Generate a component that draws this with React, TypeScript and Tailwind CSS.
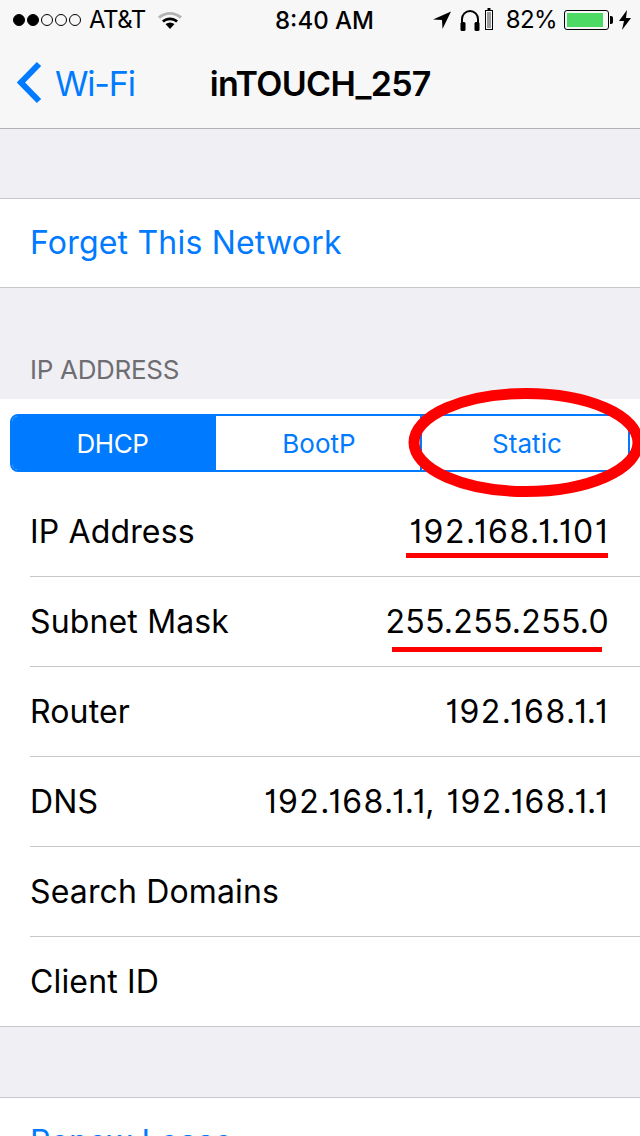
const BLUE = 'text-[#007aff]'

function StatusBar() {
  return (
    <div className="flex h-10 items-center justify-between pl-[13px] pr-[9px] text-[28px] tracking-[-0.5px] text-black">
      <div className="flex items-center">
        <div className="flex gap-[2px]">
          {[1, 2].map(i => (
            <span key={i} className="h-3 w-3 rounded-full border border-black bg-black" />
          ))}
          {[3, 4, 5].map(i => (
            <span key={i} className="h-3 w-3 rounded-full border border-black" />
          ))}
        </div>
        <span className="ml-[8px] text-[24px] leading-none">AT&amp;T</span>
        <svg width="26" height="20" viewBox="0 0 26 20" className="ml-[11px]">
          <path d="M1 6.5C8 .5 18 .5 25 6.5l-2 2.3C17 3.500 9 3.500 3 8.800z" fill="#b4b4b4" />
          <path d="M5 10.500C10 6.500 16 6.500 21 10.500l-1.800 2C15 9.500 11 9.500 6.800 12.500z" fill="#000" />
          <path d="M8.500 14C11.500 12 14.500 12 17.500 14L13 19z" fill="#000" />
        </svg>
      </div>
      <span className="absolute left-[275px] top-[6px] text-[24px] font-medium leading-[30px] tracking-[0px]">8:40 AM</span>
      <div className="flex items-center">
        <svg width="20" height="20" viewBox="0 0 20 20">
          <path d="M19 1.500 1 9.500l9 .5 .500 9z" fill="#000" />
        </svg>
        <svg width="22" height="24" viewBox="0 0 22 24" className="ml-[7px]">
          <path d="M3 18v-7a8 8 0 0 1 16 0v7" fill="none" stroke="#000" strokeWidth="2" />
          <rect x="1.500" y="14" width="5" height="9" rx="1.500" fill="#000" />
          <rect x="15.500" y="14" width="5" height="9" rx="1.500" fill="#000" />
        </svg>
        <svg width="8" height="24" viewBox="0 0 8 24" className="ml-[4px]">
          <rect x="2.500" y="0" width="3" height="2" fill="#000" />
          <rect x=".500" y="2.500" width="7" height="19" fill="none" stroke="#000" />
          <rect x="2" y="4" width="4" height="16" fill="#9a9a9a" />
        </svg>
        <span className="ml-[13px] text-[24px] leading-none tracking-[-0.6px]">82%</span>
        <div className="ml-[7px] flex h-[20px] w-[45px] items-center rounded-[3px] border border-black p-[2px]">
          <div className="h-full w-[36px] bg-[#4cd964]" />
        </div>
        <div className="ml-[1px] h-[8px] w-[3px] rounded-r-[2px] bg-black" />
        <svg width="12" height="20" viewBox="0 0 12 20" className="ml-[6px]">
          <path d="M8 0 0 11h5l-2 9 9-12H7z" fill="#000" />
        </svg>
      </div>
    </div>
  )
}

function NavBar() {
  return (
    <div className="relative flex h-[89px] items-center border-b border-[#b2b2b6]">
      <svg width="26" height="44" viewBox="0 0 26 44" className="ml-[17px] mt-[-2px]">
        <path d="M22 3 4 21.500 22 40" fill="none" stroke="#007aff" strokeWidth="6" />
      </svg>
      <span className={`ml-[12px] text-[34px] leading-none tracking-[-1.2px] ${BLUE}`}>Wi-Fi</span>
      <span className="ml-[75px] text-[34px] font-semibold leading-none tracking-[-0.7px] text-black">inTOUCH_257</span>
    </div>
  )
}

function Row({ label, value, spacing, last }: { label: string; value?: string; spacing?: string; last?: boolean }) {
  return (
    <div className={`flex flex-col pl-[30px] ${last ? 'h-[89px]' : 'h-[90px]'}`}>
      <div className={`flex flex-1 items-center justify-between pr-[31px] text-[32px] tracking-[0.15px] text-black ${last ? '' : 'border-b border-[#c8c7cc]'}`}>
        <span>{label}</span>
        {value && <span className={`[font-feature-settings:'cv01'] ${spacing}`}>{value}</span>}
      </div>
    </div>
  )
}

// the 1s sit wider in the reference, so rows with many of them get more spacing
const rows = [
  { label: 'IP Address', value: '192.168.1.101', spacing: 'tracking-[1.5px]' },
  { label: 'Subnet Mask', value: '255.255.255.0', spacing: 'tracking-[0.3px]' },
  { label: 'Router', value: '192.168.1.1', spacing: 'tracking-[1.5px]' },
  { label: 'DNS', value: '192.168.1.1, 192.168.1.1', spacing: 'tracking-[1.4px]' },
  { label: 'Search Domains' },
  { label: 'Client ID' },
]

export default function App() {
  return (
    <div className="relative h-[1136px] w-[640px] overflow-hidden bg-[#efeff4] font-['Inter',sans-serif]">
      <div className="bg-[#f7f7f8]">
        <StatusBar />
        <NavBar />
      </div>
      <div className="h-[69px]" />
      <div className={`flex h-[90px] items-center border-y border-[#c8c7cc] bg-white pl-[30px] text-[32px] tracking-[0.2px] ${BLUE}`}>
        Forget This Network
      </div>
      <div className="flex h-[111px] items-end pb-[16px] pl-[30px] text-[26px] leading-none tracking-[-0.3px] text-[#6d6d72]">
        IP ADDRESS
      </div>
      <div className="border-b border-[#c8c7cc] bg-white">
        <div className="px-[10px] py-[15px]">
          <div className={`flex h-[58px] overflow-hidden rounded-[8px] border-2 border-[#007aff] text-[26px] ${BLUE}`}>
            <div className="flex w-[204px] items-center justify-center bg-[#007aff] pr-[3px] tracking-[-0.4px] text-white">DHCP</div>
            <div className="flex w-[206px] items-center justify-center border-r-2 border-[#007aff] pl-[2px]">BootP</div>
            <div className="flex flex-1 items-center justify-center pl-[4px] tracking-[0.1px]">Static</div>
          </div>
        </div>
        {rows.map((r, i) => (
          <Row key={r.label} label={r.label} value={r.value} spacing={r.spacing} last={i === rows.length - 1} />
        ))}
      </div>
      <div className="h-[70px]" />
      <div className={`h-[100px] border-t border-[#c8c7cc] bg-white pl-[30px] pt-[20px] text-[32px] tracking-[0.1px] ${BLUE}`}>
        Renew Lease
      </div>

      {/* red annotations drawn over the screenshot */}
      <svg width="240" height="116" viewBox="0 0 240 116" className="absolute left-[404px] top-[385px]">
        <ellipse cx="122" cy="57.500" rx="112" ry="49" fill="none" stroke="#ff0000" strokeWidth="11" />
      </svg>
      <div className="absolute left-[406px] top-[553px] h-[5px] w-[202px] bg-[#f00]" />
      <div className="absolute left-[392px] top-[647px] h-[5px] w-[210px] bg-[#f00]" />
    </div>
  )
}
